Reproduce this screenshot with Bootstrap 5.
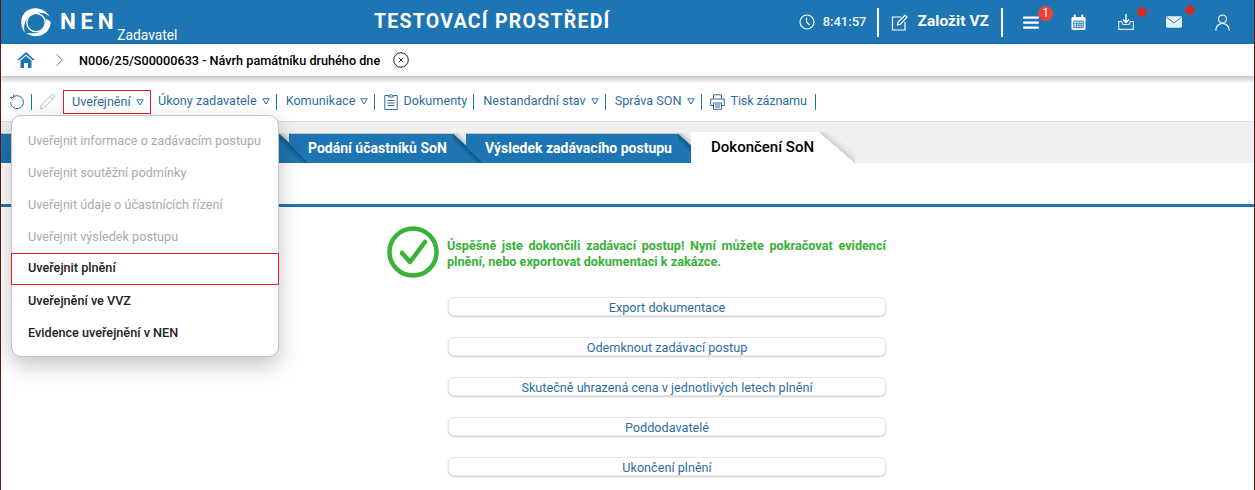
<!doctype html>
<html lang="cs"><head><meta charset="utf-8"><title>NEN</title>
<link href="https://cdn.jsdelivr.net/npm/bootstrap@5.3.0/dist/css/bootstrap.min.css" rel="stylesheet">
<style>
html,body{height:490px;overflow:hidden}
body{font-family:Roboto,"Liberation Sans",sans-serif;font-size:12.67px;background:#fff;color:#000;position:relative;border-left:1px solid #5e1a12;border-right:1px solid #5e1a12}
.topbar{height:44px;background:#1d75b3;color:#fff;padding:0}
.logo-ic{margin-left:19px;flex-shrink:0}
.nen{font-size:22.5px;font-weight:700;letter-spacing:4.6px;line-height:1;margin-left:8px;margin-top:-1px}
.zad{font-size:13.8px;align-self:flex-end;margin-left:-1px;line-height:16px;margin-bottom:1px}
.envtitle{position:absolute;left:373px;top:0;line-height:44px;font-size:19.5px;font-weight:700;letter-spacing:1.25px}
.tright{margin-left:auto;height:44px;padding-right:24px}
.tsep{width:2px;height:29px;background:#fff}
.clock{font-size:13px;font-weight:500;margin:0 11px 0 8px;color:#f1f6fa}
.newvz{font-size:15.4px;font-weight:700;margin:0 12px 0 9px;letter-spacing:.1px}
.edit-ic{margin-left:12px}
.dot{position:absolute;width:10px;height:10px;border-radius:50%;background:#c62f2f;top:-7px;right:-13px}
.tic{position:relative;display:block;line-height:0}
.cnt{position:absolute;width:15px;height:15px;border-radius:50%;background:#ea4335;color:#fff;font-size:12px;line-height:15px;text-align:center;top:-10px;right:-14px}
.ml20{margin-left:20px}.ml31{margin-left:31px}.ml32{margin-left:32px}.ml33{margin-left:33px}
.crumb{height:32px;background:#fff;box-shadow:0 2px 5px rgba(0,0,0,.22);position:relative;z-index:2;padding-left:16px}
.crumb b{font-weight:500;font-size:12.67px;margin:0 13px 0 16px;color:#000}
.chev{margin-left:21px}
.gband{background:#f0f0f0;padding-top:6px}
.tools{height:40px;background:#fff;border-bottom:1px solid #ddd;padding-left:8px;color:#2f6fa5}
.tools .vs{width:1px;height:16px;background:#1d75b3;margin:0 9px 0 6px;flex:none}
.tools .vs.first{margin:0 8px 0 6px}
.tools .vs.pre-prn{margin-right:8px}
.tools .vs.last{margin-left:8px}
.tools .it{white-space:nowrap;color:#2e6da4;display:flex;align-items:center;margin-top:-2px}
.tri{margin-left:5px;margin-top:2px}
.doc-ic{margin-right:5px;margin-top:2px}
.prn-ic{margin-right:6px;margin-top:2px}
.tisk{letter-spacing:-.15px}
.pen-ic{margin-right:8px}
.hit{outline:1px solid #e31e24;height:22px;width:86px;padding:0 0 0 8px;margin:0 8px 0 0;display:flex;align-items:center}
.tools .it.hit{margin-top:0}
.tabsrow{background:#f0f0f0;padding-top:10px;height:41px;position:relative;z-index:0}
.tb{position:relative;height:29px;margin-top:2px;background:#1d75b3;color:#fff;font-weight:700;font-size:14px;line-height:29px;box-shadow:0 -1px 0 #c9c9c9}
.tb::before{content:"";position:absolute;left:100%;top:-1px;width:31px;height:30px;z-index:-1;background:linear-gradient(to top right,#1d75b3 0,#1d75b3 49.5%,#c4c4c4 50%,#e6e6e6 60%,#f0f0f0 68%)}
.tb .shd{position:absolute;left:100%;top:0;width:30px;height:29px;z-index:1;background:linear-gradient(to top right,transparent 0,transparent 36%,#14598a 49.5%,transparent 50%);pointer-events:none}
.tb0{width:278px;padding-left:20px}
.tb1{width:164px;margin-left:10px;padding-left:19px}
.tb2{width:212px;margin-left:13px;padding-left:19px}
.tb3{width:128px;height:31px;margin-top:0;margin-left:13px;padding-left:20px;background:#fff;color:#000;font-weight:500;font-size:15px;line-height:30px;box-shadow:none;z-index:2}
.tb3::before{width:36px;height:31px;top:0;background:linear-gradient(to top right,#fff 0,#fff 49.5%,#cfcfcf 50%,#e8e8e8 60%,#f0f0f0 68%)}
.panel{background:#fff;height:44px;border-bottom:3px solid #1d75b3}
.msgbox{margin-left:386px;width:499px;margin-top:19px;height:52px}
.okmsg{color:#38b238;font-weight:700;font-size:12.67px;line-height:16px;text-align:justify;margin:12px 0 0 8px}
.acts{margin-left:447px;width:438px;margin-top:19px;gap:21px}
.acts .btn{height:19px;line-height:17px;padding:1px 0 0;font-size:12.67px;color:#2e6da4;background:#fff;border:1px solid #e4e4e4;border-radius:6px;box-shadow:0 1px 2px rgba(0,0,0,.2);--bs-btn-hover-bg:#fff}
.pop{display:block;left:10px;top:115px;width:268px;height:242px;padding:9px 0 0;margin:0;border:1px solid #c4c4c4;border-radius:10px;box-shadow:0 8px 22px rgba(0,0,0,.24);z-index:5}
.pop .dropdown-item{height:32px;line-height:32px;padding:0 16px;font-weight:500;color:#222;font-size:12.67px;background:none}
.pop .dropdown-item.disabled{color:#aaa;font-weight:400}
.pop .dropdown-item.hot{outline:1px solid #e31e24;outline-offset:-1px;width:268px;margin-left:-1px;padding-left:17px;line-height:30px}
</style></head>
<body>
<nav class="navbar topbar d-flex flex-nowrap align-items-center">
 <svg class="logo-ic" width="32" height="32" viewBox="0 0 34 32"><path d="M17 1.500C9 1 2.500 6.500 1.500 14c-.5 5 .5 9.500 3.500 13.500 -1.500-6-.5-11 2.500-15C10 9 14 6.800 20 5.800 26 6 28 8 31 9.500 28 4.500 23 2 17 1.500Z" fill="#fff"/><path d="M32.500 16C33 23 27 30 19 31 14 31.500 10 30.500 6.500 27.500 12 28.500 17 28.300 21 26 25 23.500 27.500 19 27.500 12.500 29.500 13.500 31.500 14.500 32.500 16Z" fill="#fff"/><circle cx="17" cy="16.500" r="9.800" fill="none" stroke="#fff" stroke-width="1.400"/></svg>
 <span class="nen">NEN</span><span class="zad">Zadavatel</span>
 <span class="envtitle">TESTOVACÍ PROSTŘEDÍ</span>
 <div class="tright d-flex align-items-center">
  <svg width="16" height="16" viewBox="0 0 16 16" fill="none" stroke="#fff" stroke-width="1.200"><circle cx="8" cy="8" r="7"/><path d="M7.500 3.500V8l3 3"/></svg>
  <span class="clock">8:41:57</span><span class="tsep"></span>
  <svg class="edit-ic" width="17" height="17" viewBox="0 0 17 17" fill="none" stroke="#fff" stroke-width="1.200"><path d="M10 3H1.500v13H14V8"/><path d="M6.500 11l.6-3L14 1.200l2 2L9.300 10.300z"/></svg>
  <span class="newvz">Založit VZ</span><span class="tsep"></span>
  <span class="tic ml20"><svg width="16" height="13" viewBox="0 0 16 13" fill="#fff"><rect width="16" height="2.200" y=".5" rx="1"/><rect width="16" height="2.200" y="5.500" rx="1"/><rect width="16" height="2.200" y="10.500" rx="1"/></svg><span class="cnt">1</span></span>
  <span class="tic ml32"><svg width="15" height="17" viewBox="0 0 16 17"><path d="M2 2.500h12a1.500 1.500 0 0 1 1.500 1.500v11a1.500 1.500 0 0 1-1.500 1.500H2A1.500 1.500 0 0 1 .5 15V4A1.500 1.500 0 0 1 2 2.500Z" fill="#fff"/><path d="M4 0v4M12 0v4" stroke="#fff" stroke-width="2"/><path d="M2.500 6.500h11v8h-11z" fill="#1d75b3"/><path d="M3.500 7.500h9v6h-9z" fill="#fff"/><path d="M6 7.500v6M8.500 7.500v6M10.800 7.500v6M3.500 9.500h9M3.500 11.500h9" stroke="#1d75b3" stroke-width=".8"/></svg></span>
  <span class="tic ml32"><svg width="16" height="16" viewBox="0 0 16 16" fill="none" stroke="#fff" stroke-width="1.200"><path d="M8 0v8M5 5.500L8 8.500l3-3" stroke-width="1.400"/><path d="M3.500 7.500H.7v7.800h14.600V7.500h-2.800L11 10.500H5z" stroke="#d6e6f2"/></svg><span class="dot"></span></span>
  <span class="tic ml32"><svg width="16" height="12" viewBox="0 0 17 12"><rect width="17" height="12" rx="1.500" fill="#e6f0f7"/><path d="M.5 1l8 6 8-6" fill="none" stroke="#1d75b3" stroke-width="1"/></svg><span class="dot" style="top:-11px;right:-13px"></span></span>
  <span class="tic ml33"><svg width="15" height="17" viewBox="0 0 15 17" fill="none" stroke="#fff" stroke-width="1.200"><circle cx="7.500" cy="5" r="4"/><path d="M.7 16.500c0-4 3-7 6.800-7s6.800 3 6.800 7"/></svg></span>
 </div>
</nav>
<div class="crumb d-flex align-items-center">
 <svg width="18" height="16" viewBox="0 0 18 16"><path d="M9 0L0 8h2.500L9 2.500 15.500 8H18z" fill="#1d75b3"/><path d="M3.500 8.500L9 4l5.500 4.500V16H11v-5H7v5H3.500z" fill="#1d75b3"/></svg>
 <svg class="chev" width="7" height="12" viewBox="0 0 7 12" fill="none" stroke="#777"><path d="M.5.500L6.500 6 .5 11.500"/></svg>
 <b>N006/25/S00000633 - Návrh památníku druhého dne</b>
 <svg width="16" height="16" viewBox="0 0 16 16" fill="none" stroke="#222" stroke-width="1"><circle cx="8" cy="8" r="7.300"/><path d="M5.800 5.800l4.400 4.400M10.200 5.800l-4.400 4.400"/></svg>
</div>
<div class="gband">
 <div class="tools d-flex align-items-center">
  <svg width="16" height="16" viewBox="0 0 16 16" fill="none" stroke="#2e6da4" stroke-width="1"><path d="M4.500 2.700A6.500 6.500 0 1 1 1.500 8.500"/><path d="M4.700 .5v2.800H1.300L3.500 5.500"/></svg>
  <span class="vs first"></span>
  <svg class="pen-ic" width="16" height="17" viewBox="0 0 16 17" fill="none" stroke="#bbb"><path d="M1 12.500L11.500 2c1-1 2-1 2.800-.2s.8 1.800-.2 2.800L3.500 15.200.8 16z"/><path d="M10 3.500l3 3"/></svg>
  <span class="it hit">Uveřejnění<svg class="tri" width="8" height="7" viewBox="0 0 8 7" fill="none" stroke="#2e6da4"><path d="M.8.800h6.400L4 6z"/></svg></span>
  <span class="it">Úkony zadavatele<svg class="tri" width="8" height="7" viewBox="0 0 8 7" fill="none" stroke="#2e6da4"><path d="M.8.800h6.400L4 6z"/></svg></span><span class="vs"></span>
  <span class="it">Komunikace<svg class="tri" width="8" height="7" viewBox="0 0 8 7" fill="none" stroke="#2e6da4"><path d="M.8.800h6.400L4 6z"/></svg></span><span class="vs"></span>
  <span class="it"><svg class="doc-ic" width="14" height="17" viewBox="0 0 14 17" fill="none" stroke="#2e6da4"><path d="M4 2.500H.8v14h12.400v-14H10"/><path d="M4.500 4V2.500h1.500a1 1 0 0 1 2 0h1.500V4z"/><path d="M3.500 7.500h7M3.500 10h7M3.500 12.500h7"/></svg>Dokumenty</span><span class="vs"></span>
  <span class="it">Nestandardní stav<svg class="tri" width="8" height="7" viewBox="0 0 8 7" fill="none" stroke="#2e6da4"><path d="M.8.800h6.400L4 6z"/></svg></span><span class="vs"></span>
  <span class="it">Správa SON<svg class="tri" width="8" height="7" viewBox="0 0 8 7" fill="none" stroke="#2e6da4"><path d="M.8.800h6.400L4 6z"/></svg></span><span class="vs pre-prn"></span>
  <span class="it"><svg class="prn-ic" width="15" height="16" viewBox="0 0 15 16" fill="none" stroke="#2e6da4"><path d="M3.500 5V.8h8V5"/><path d="M3 11.500H.7V5h13.600v6.500H12"/><path d="M3.500 9h8v6.300h-8zM5 11h5M5 13h5"/></svg><span class="tisk">Tisk záznamu</span></span><span class="vs last"></span>
 </div>
 <div class="tabsrow d-flex">
  <div class="tb tb0"><span class="shd"></span></div>
  <div class="tb tb1">Podání účastníků SoN<span class="shd"></span></div>
  <div class="tb tb2">Výsledek zadávacího postupu<span class="shd"></span></div>
  <div class="tb tb3">Dokončení SoN</div>
 </div>
</div>
<div class="panel"></div>
<div class="msgbox d-flex">
 <svg width="52" height="52" viewBox="0 0 52 52" class="flex-shrink-0"><circle cx="26" cy="26" r="23.500" fill="none" stroke="#38b238" stroke-width="4.500"/><path d="M15 27l8 9 15-20" fill="none" stroke="#38b238" stroke-width="4.500" stroke-linecap="round" stroke-linejoin="round"/></svg>
 <p class="okmsg">Úspěšně jste dokončili zadávací postup! Nyní můžete pokračovat evidencí plnění, nebo exportovat dokumentaci k zakázce.</p>
</div>
<div class="acts d-flex flex-column">
 <button class="btn">Export dokumentace</button>
 <button class="btn">Odemknout zadávací postup</button>
 <button class="btn">Skutečně uhrazená cena v jednotlivých letech plnění</button>
 <button class="btn">Poddodavatelé</button>
 <button class="btn">Ukončení plnění</button>
</div>
<ul class="dropdown-menu pop position-absolute list-unstyled">
 <li><a class="dropdown-item disabled">Uveřejnit informace o zadávacím postupu</a></li>
 <li><a class="dropdown-item disabled">Uveřejnit soutěžní podmínky</a></li>
 <li><a class="dropdown-item disabled">Uveřejnit údaje o účastnících řízení</a></li>
 <li><a class="dropdown-item disabled">Uveřejnit výsledek postupu</a></li>
 <li><a class="dropdown-item hot">Uveřejnit plnění</a></li>
 <li><a class="dropdown-item">Uveřejnění ve VVZ</a></li>
 <li><a class="dropdown-item">Evidence uveřejnění v NEN</a></li>
</ul>
<script src="https://cdn.jsdelivr.net/npm/bootstrap@5.3.0/dist/js/bootstrap.bundle.min.js"></script>
</body></html>
